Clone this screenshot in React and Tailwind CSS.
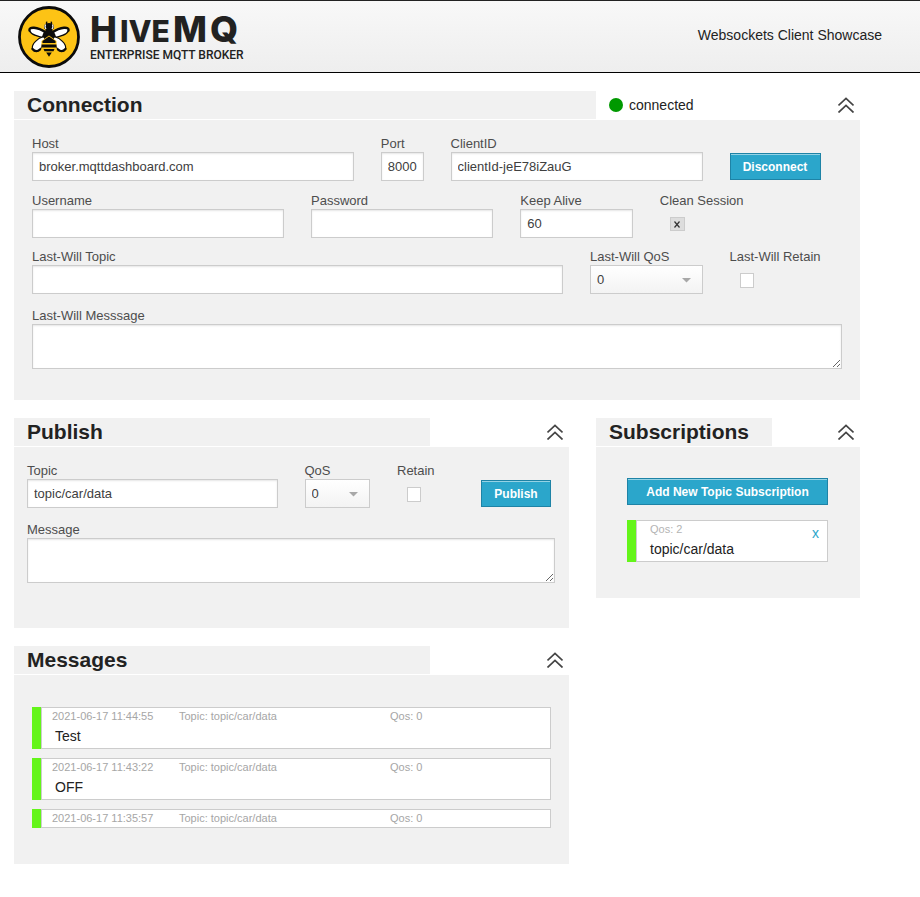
import React, { useId, useState } from "react";

const control =
  "block w-full border border-[#ccc] bg-white px-[6px] text-[13px] text-[#404040] outline-none shadow-[inset_0_1px_2px_rgba(0,0,0,0.1)]";

function BeeLogo() {
  return (
    <svg width="62" height="62" viewBox="0 0 62 62" aria-hidden="true">
      <circle cx="31" cy="31" r="29.5" fill="#fdc315" stroke="#0b0b0b" strokeWidth="2.8" />
      <g fill="#fff" stroke="#0b0b0b" strokeWidth="1.2" strokeLinejoin="round">
        <path d="M29 32C21 31 13 29 11.500 24.500C10.500 20.500 19 20.500 28 26.500Z" />
        <path d="M33 32C41 31 49 29 50.500 24.500C51.500 20.500 43 20.500 34 26.500Z" />
        <path d="M27 30C20 32 13 38 14.500 43C18 48 24 44 26.500 35Z" />
        <path d="M35 30C42 32 49 38 47.500 43C44 48 38 44 35.500 35Z" />
      </g>
      <g fill="none" stroke="#0b0b0b" strokeWidth="2.4" strokeLinecap="round">
        <path d="M28 26.500C19 20.500 10.500 20.500 11.500 24.500M34 26.500C43 20.500 51.500 20.500 50.500 24.500" />
        <path d="M14.500 43C17 46 20 45.500 22 43.500M47.500 43C45 46 42 45.500 40 43.500" />
      </g>
      <path d="M29 18.500Q27.500 17 29.300 15.800M33 18.500Q34.500 17 32.700 15.800" fill="none" stroke="#0b0b0b" strokeWidth="1.2" />
      <ellipse cx="31" cy="21" rx="5" ry="4" fill="#0b0b0b" />
      <path d="M27.500 18.500Q26.300 21 28 23M34.500 18.500Q35.700 21 34 23" fill="none" stroke="#fff" strokeWidth="1.2" />
      <path d="M31 23C35 23 37 27 38 31L31 34L24 31C25 27 27 23 31 23Z" fill="#0b0b0b" />
      <path d="M31 29.500L38.500 35V43Q36 47 31 50Q26 47 23.500 43V35Z" fill="#fdc315" />
      <path
        d="M24.500 35L31 30.500L37.500 35V37H24.500ZM23.500 38.500H38.500V41.500H23.500ZM25.500 43H36.500L35.500 45.200H26.500ZM28.200 46.500H33.800L31 50.800Z"
        fill="#0b0b0b"
      />
    </svg>
  );
}

function Header() {
  return (
    <header className="flex h-[73px] items-center justify-between border-y border-t-[#222] border-b-black bg-linear-to-b from-[#f8f8f8] to-[#eeeeee] pr-[38px] pl-[18px]">
      <div className="flex items-center gap-[10px] text-[#222221]">
        <BeeLogo />
        <div className="flex flex-col">
          <div className="flex items-baseline gap-[3px] font-['Inter',sans-serif] text-[36px] leading-[34px] font-extrabold">
            <span>H</span>
            <span className="text-[30px]">IVE</span>
            <span>M</span>
            <span>Q</span>
          </div>
          <div className="font-['Roboto',sans-serif] text-[12px] leading-[14px] font-medium">ENTERPRISE MQTT BROKER</div>
        </div>
      </div>
      <h3 className="pb-[4px] text-[14px] leading-[20px]">Websockets Client Showcase</h3>
    </header>
  );
}

function Panel({ title, columns, status, bodyClass, children }) {
  const [open, setOpen] = useState(true);
  return (
    <section>
      <div className={`grid h-[28px] ${columns}`}>
        <h2 className="bg-[#f1f1f1] pl-[13px] text-[21px] leading-[28px] font-bold">{title}</h2>
        <div className="flex items-center justify-between pr-[6px] pl-[13px]">
          <div className="flex items-center gap-[6px] text-[14px]">{status}</div>
          <button type="button" aria-label={`Toggle ${title}`} aria-expanded={open} onClick={() => setOpen(!open)}>
            <svg className="block" width="16" height="16" viewBox="0 0 16 16" fill="none" stroke="#444" strokeWidth="1.7">
              <path d="M0.500 8.500L8 1.500L15.500 8.500M0.500 15.500L8 8.500L15.500 15.500" />
            </svg>
          </button>
        </div>
      </div>
      {open && <div className={`mt-px bg-[#f1f1f1] ${bodyClass}`}>{children}</div>}
    </section>
  );
}

function Field({ label, span, children }) {
  const id = useId();
  return (
    <div className={span}>
      <label htmlFor={id} className="block text-[13px] leading-[17px] whitespace-nowrap text-[#4d4d4d]">
        {label}
      </label>
      {children(id)}
    </div>
  );
}

function TextField({ label, span, value = "", type = "text" }) {
  return (
    <Field label={label} span={span}>
      {(id) => <input id={id} type={type} defaultValue={value} className={`${control} h-[29px]`} />}
    </Field>
  );
}

function AreaField({ label, span }) {
  return (
    <Field label={label} span={span}>
      {(id) => <textarea id={id} className={`${control} h-[45px]`} />}
    </Field>
  );
}

function QosField({ label, span }) {
  return (
    <Field label={label} span={span}>
      {(id) => (
        <div className="relative">
          <select
            id={id}
            className="block h-[29px] w-full appearance-none border border-[#ccc] bg-linear-to-b from-white to-[#f3f3f3] px-[6px] text-[13px] text-[#404040] outline-none"
          >
            <option>0</option>
            <option>1</option>
            <option>2</option>
          </select>
          <svg className="pointer-events-none absolute top-[13px] right-[12px]" width="9" height="5" viewBox="0 0 9 5">
            <path d="M0 0H9L4.500 4.500Z" fill="#a8a8a8" />
          </svg>
        </div>
      )}
    </Field>
  );
}

function CheckField({ label, span, checked = false }) {
  return (
    <Field label={label} span={span}>
      {(id) => (
        <div className="ml-[10px] grid w-[14px] pt-[8px]">
          <input
            id={id}
            type="checkbox"
            defaultChecked={checked}
            className="peer col-start-1 row-start-1 block h-[15px] w-[14px] appearance-none border border-[#ccc] bg-white checked:h-[14px] checked:w-[15px] checked:bg-[#ddd]"
          />
          <svg
            className="pointer-events-none col-start-1 row-start-1 hidden self-center justify-self-center peer-checked:block"
            width="6"
            height="7"
            viewBox="0 0 6 7"
            fill="none"
            stroke="#333"
            strokeWidth="1.2"
          >
            <path d="M0.500 0.500L5.500 6.500M5.500 0.500L0.500 6.500" />
          </svg>
        </div>
      )}
    </Field>
  );
}

function Button({ className, children }) {
  return (
    <button
      type="button"
      className={`h-[27px] border border-[#1e83a6] bg-[#2ba6cb] text-center text-[12px] font-bold whitespace-nowrap text-white shadow-[inset_0_1px_0_rgba(255,255,255,0.5)] ${className}`}
    >
      {children}
    </button>
  );
}

const messages = [
  { time: "2021-06-17 11:44:55", topic: "topic/car/data", qos: 0, body: "Test" },
  { time: "2021-06-17 11:43:22", topic: "topic/car/data", qos: 0, body: "OFF" },
  { time: "2021-06-17 11:35:57", topic: "topic/car/data", qos: 0, body: "" },
];

export default function App() {
  return (
    <div className="min-h-screen bg-white font-['Liberation_Sans',Arial,sans-serif] text-[#222]">
      <Header />
      <main className="flex flex-col gap-[18px] pt-[18px] pr-[60px] pb-[32px] pl-[14px]">
        <Panel
          title="Connection"
          columns="grid-cols-[582fr_264fr]"
          bodyClass="px-[18px] pt-[15px] pb-[31px]"
          status={
            <>
              <span className="size-[14px] rounded-full bg-[#009900]" />
              connected
            </>
          }
        >
          <form className="flex flex-col">
            <div className="grid grid-cols-12 gap-x-[27px]">
              <TextField label="Host" span="col-span-5" value="broker.mqttdashboard.com" />
              <TextField label="Port" span="col-span-1" value="8000" />
              <TextField label="ClientID" span="col-span-4" value="clientId-jeE78iZauG" />
              <div className="col-span-2 flex items-end pb-px">
                <Button className="w-[91px]">Disconnect</Button>
              </div>
            </div>
            <div className="mt-[11px] grid grid-cols-12 gap-x-[27px]">
              <TextField label="Username" span="col-span-4" />
              <TextField label="Password" span="col-span-3" type="password" />
              <TextField label="Keep Alive" span="col-span-2" value="60" />
              <CheckField label="Clean Session" span="col-span-3" checked />
            </div>
            <div className="mt-[10px] mb-[13px] grid grid-cols-12 gap-x-[27px]">
              <TextField label="Last-Will Topic" span="col-span-8" />
              <QosField label="Last-Will QoS" span="col-span-2" />
              <CheckField label="Last-Will Retain" span="col-span-2" />
            </div>
            <AreaField label="Last-Will Messsage" />
          </form>
        </Panel>

        <div className="grid grid-cols-[555fr_264fr] items-start gap-x-[27px]">
          <div className="flex flex-col gap-[18px]">
            <Panel title="Publish" columns="grid-cols-[3fr_1fr]" bodyClass="pt-[15px] pr-[14px] pb-[45px] pl-[13px]">
              <form className="flex flex-col gap-[13px]">
                <div className="grid grid-cols-12 gap-x-[27px]">
                  <TextField label="Topic" span="col-span-6" value="topic/car/data" />
                  <QosField label="QoS" span="col-span-2" />
                  <CheckField label="Retain" span="col-span-1" />
                  <div className="col-span-3 flex items-end justify-end pr-[4px] pb-px">
                    <Button className="w-[70px]">Publish</Button>
                  </div>
                </div>
                <AreaField label="Message" />
              </form>
            </Panel>

            <Panel title="Messages" columns="grid-cols-[3fr_1fr]" bodyClass="px-[18px] pt-[32px] pb-[36px]">
              <ul className="flex flex-col gap-[9px]">
                {messages.map((m) => (
                  <li key={m.time} className="flex bg-[#64f51a] pl-[9px]">
                    <div className="flex-1 border border-[#ccc] bg-white pl-[10px]">
                      <div className="grid grid-cols-[127fr_211fr_160fr] text-[11px] leading-[17px] text-[#a6a6a6]">
                        <span>{m.time}</span>
                        <span>Topic: {m.topic}</span>
                        <span>Qos: {m.qos}</span>
                      </div>
                      {m.body && <p className="pl-[3px] text-[14px] leading-[23px]">{m.body}</p>}
                    </div>
                  </li>
                ))}
              </ul>
            </Panel>
          </div>

          <Panel title="Subscriptions" columns="grid-cols-[2fr_1fr]" bodyClass="flex flex-col gap-[15px] pt-[31px] pr-[32px] pb-[36px] pl-[31px]">
            <Button className="w-full">Add New Topic Subscription</Button>
            <div className="flex bg-[#64f51a] pl-[9px]">
              <div className="flex flex-1 justify-between border border-[#ccc] bg-white pr-[8px] pl-[13px]">
                <div>
                  <div className="text-[11px] leading-[17px] text-[#b4b4b4]">Qos: 2</div>
                  <div className="text-[14px] leading-[23px]">topic/car/data</div>
                </div>
                <a href="#unsubscribe" className="text-[14px] leading-[24px] text-[#2ba6cb]">
                  x
                </a>
              </div>
            </div>
          </Panel>
        </div>
      </main>
    </div>
  );
}
